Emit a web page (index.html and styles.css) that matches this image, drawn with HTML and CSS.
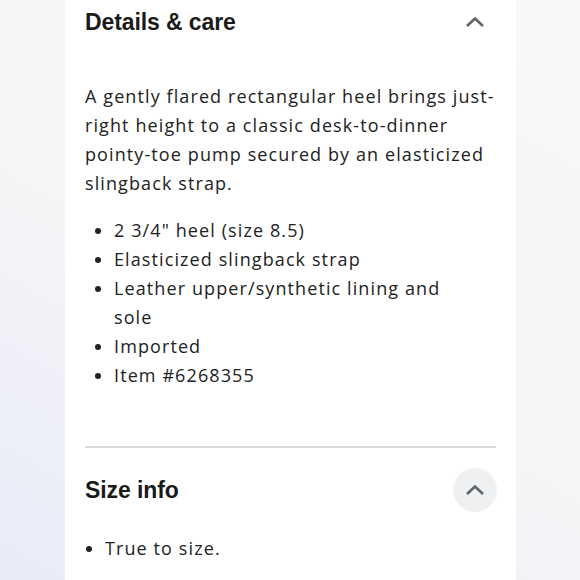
FILE: index.html
```html
<!DOCTYPE html>
<html>
<head>
<meta charset="utf-8">
<link rel="stylesheet" href="styles.css">
</head>
<body>
<main class="card">
  <section class="section">
    <div class="section-head">
      <h2 class="section-title">Details &amp; care</h2>
      <button class="toggle" aria-label="Collapse">
        <svg width="20" height="12" viewBox="0 0 20 12"><path d="M2 10 L10 2.5 L18 10" fill="none" stroke="#5f6468" stroke-width="2.6"/></svg>
      </button>
    </div>
    <p class="desc">A gently flared rectangular heel brings just-right height to a classic desk-to-dinner pointy-toe pump secured by an elasticized slingback strap.</p>
    <ul class="features">
      <li>2 3/4" heel (size 8.5)</li>
      <li>Elasticized slingback strap</li>
      <li>Leather upper/synthetic lining and sole</li>
      <li>Imported</li>
      <li>Item #6268355</li>
    </ul>
  </section>
  <section class="section section-size">
    <div class="section-head">
      <h2 class="section-title">Size info</h2>
      <button class="toggle toggle-round" aria-label="Collapse">
        <svg width="20" height="12" viewBox="0 0 20 12"><path d="M2 10 L10 2.5 L18 10" fill="none" stroke="#5f6468" stroke-width="2.6"/></svg>
      </button>
    </div>
    <ul class="size-list">
      <li>True to size.</li>
    </ul>
  </section>
</main>
</body>
</html>
```
FILE: styles.css
```css
html, body {
  margin: 0;
  padding: 0;
  height: 100%;
}
body {
  background: linear-gradient(210deg, #f8f8f9 0%, #f5f5f7 55%, #e9ebf8 100%);
  font-family: "Open Sans", "Noto Sans", sans-serif;
  color: #222;
  overflow: hidden;
}
.card {
  margin-left: 65px;
  width: 411px;
  padding: 0 20px;
  background: #fff;
  min-height: 100%;
}
.section-head {
  display: flex;
  align-items: center;
  justify-content: space-between;
  height: 44px;
}
.section-title {
  margin: 0;
  font-family: "Liberation Sans", Arial, sans-serif;
  font-weight: 700;
  font-size: 23px;
  letter-spacing: -0.1px;
  color: #1a1a1a;
}
.toggle {
  width: 44px;
  height: 44px;
  border: 0;
  padding: 0;
  margin-right: -1px;
  background: transparent;
  display: flex;
  align-items: center;
  justify-content: center;
}
.toggle-round {
  background: #eef0f2;
  border-radius: 50%;
}
.desc, .features, .size-list {
  font-size: 18px;
  line-height: 29px;
  letter-spacing: 1.1px;
}
.desc {
  margin: 38px 0 0;
}
.features {
  margin: 18px 0 0;
  padding: 0 40px 0 29px;
}
.section-size {
  margin-top: 56px;
  border-top: 2px solid #d8d8da;
  padding-top: 20px;
}
.size-list {
  margin: 22px 0 0;
  padding: 0 0 0 20px;
}
```
